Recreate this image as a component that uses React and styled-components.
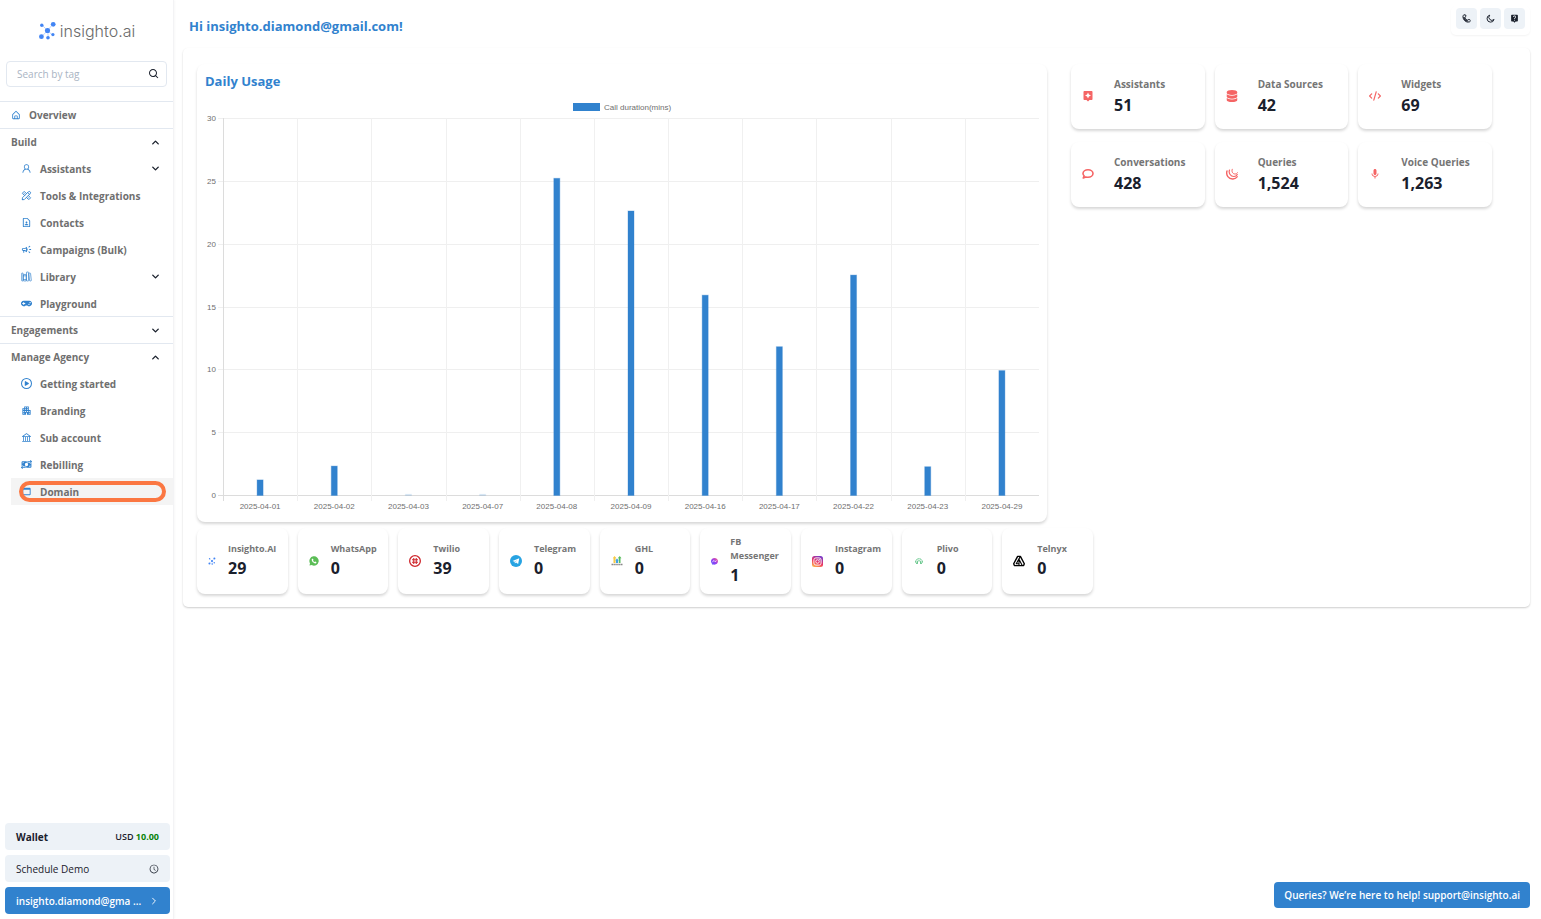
import { useState } from "react";
import styled, { createGlobalStyle, css } from "styled-components";
import { AiOutlineUser, AiOutlineBank, AiOutlineClockCircle } from "react-icons/ai";
import { BiHomeAlt, BiSearch } from "react-icons/bi";
import { FaGamepad } from "react-icons/fa";
import { FaDatabase, FaCode, FaRegCirclePlay, FaMoneyBillTransfer } from "react-icons/fa6";
import { IoLibraryOutline, IoChevronForward } from "react-icons/io5";
import { LuChevronDown, LuChevronUp } from "react-icons/lu";
import { TbTools } from "react-icons/tb";
import {
  MdAssistant,
  MdMic,
  MdLiveHelp,
  MdOutlineCampaign,
  MdOutlineContactPage,
  MdWebAsset,
  MdApartment,
} from "react-icons/md";

/* ---------- icons and logos ---------- */

const BubbleIcon = () => (
  <svg viewBox="0 0 24 24" fill="none" stroke="currentColor" strokeWidth="3.200" strokeLinejoin="round" aria-hidden="true">
    <path d="M12 3.500 C17.500 3.500 22 6.700 22 11 C22 15.300 17.500 18.500 12 18.500 C10.500 18.500 9 18.300 7.700 17.800 L2.500 20 L4.300 15.500 C2.800 14.300 2 12.700 2 11 C2 6.700 6.500 3.500 12 3.500 Z" />
  </svg>
);

const JqueryIcon = () => (
  <svg viewBox="0 0 24 24" fill="none" stroke="currentColor" strokeLinecap="round" aria-hidden="true">
    <path d="M2 6 C-0.500 14 5 22.500 14 22 C18 21.800 21 20 22.500 17.500" strokeWidth="2.800" />
    <path d="M7 4 C4.500 10.500 9.500 17.300 16 17 C19.500 16.800 21.500 15 22.500 13" strokeWidth="2.400" />
    <path d="M12.500 2.500 C10.500 7 13.500 12 18 12 C20.500 12 22 11 22.800 9.500" strokeWidth="2" />
  </svg>
);

const CallIcon = () => (
  <svg viewBox="0 0 24 24" fill="none" stroke="currentColor" strokeWidth="2.200" aria-hidden="true">
    <circle cx="6" cy="6" r="3.600" />
    <circle cx="18.500" cy="18" r="3.600" />
    <path d="M2.500 7.500 C3 15 9 21.500 16.500 21.800 M8 9 C9 12.500 11.500 15 15 16.500" strokeWidth="2.600" />
    <path d="M5 11 C7 15 9 17 13 19" strokeWidth="3" />
    <path d="M6 1 C9 1 11 3 11 6" strokeWidth="1.800" />
  </svg>
);

const MoonIcon = () => (
  <svg viewBox="0 0 24 24" fill="none" stroke="currentColor" strokeWidth="2.600" strokeLinejoin="round" aria-hidden="true">
    <path d="M10 3 A9.500 9.500 0 1 0 21.500 14.500 A7.500 7.500 0 0 1 10 3 Z" />
  </svg>
);

const Molecule = ({ size }) => (
  <svg width={size} height={size} viewBox="0 0 18 20" fill="#4285f4" aria-hidden="true">
    <path d="M3 4 L9 10 L15 3 M2.500 17 L9 10 L14.500 15 M9 10 L10 18" stroke="#a9c6fb" strokeWidth="0.800" fill="none" />
    <circle cx="3" cy="4.500" r="1.800" />
    <circle cx="15" cy="3.500" r="2.500" />
    <circle cx="9" cy="10" r="2.700" />
    <circle cx="2.600" cy="16.500" r="2.500" />
    <circle cx="9.500" cy="17.700" r="1.900" />
    <circle cx="14.700" cy="14.300" r="1.700" />
  </svg>
);

const WhatsAppLogo = () => (
  <svg width="10" height="10" viewBox="0 0 20 20" aria-hidden="true">
    <path d="M1 19 L2 14.500 A9.300 9.300 0 1 1 5.500 18 Z" fill="#5bbd56" />
    <path d="M6.300 5.500 L8 5.300 L9 8 L8 9.200 Q9 11.300 11.300 12.200 L12.600 11.200 L15 12.500 Q14.500 15 12 15 Q6 13.500 5.300 8 Q5.300 6.300 6.300 5.500 Z" fill="#fff" />
  </svg>
);

const TwilioLogo = () => (
  <svg width="12" height="12" viewBox="0 0 24 24" fill="none" stroke="#cf272d" aria-hidden="true">
    <circle cx="12" cy="12" r="10.700" strokeWidth="2.600" />
    <path d="M9.500 6 V18 M14.500 6 V18 M6 9.500 H18 M6 14.500 H18" strokeWidth="2.200" />
  </svg>
);

const TelegramLogo = () => (
  <svg width="12" height="12" viewBox="0 0 24 24" aria-hidden="true">
    <circle cx="12" cy="12" r="12" fill="#27a3e2" />
    <path d="M5 12 L18.500 6.500 L16.300 18 L12 15 L9.800 17 L9.300 13.500 Z" fill="#fff" />
    <path d="M9.600 13.600 L15.500 9.200 L11 14.400 Z" fill="#9fcdec" />
  </svg>
);

const GhlLogo = () => (
  <svg width="12" height="12" viewBox="0 0 24 24" aria-hidden="true">
    <path d="M7 2 L11 6.500 H9 V16 H5 V6.500 H3.500 Z" fill="#f6c945" />
    <path d="M12 7 L15.500 11 H14 V16 H10 V11 H8.500 Z" fill="#3fa0e8" />
    <path d="M17.500 2 L21 6.500 H19 V16 H15.500 V6.500 H13.500 Z" fill="#58bd5b" />
    <path d="M1 19 H23" stroke="#888" strokeWidth="2.600" strokeDasharray="3 0.800" />
  </svg>
);

const MessengerLogo = () => (
  <svg width="7" height="7" viewBox="0 0 20 20" aria-hidden="true">
    <defs>
      <linearGradient id="msgr" x1="0" y1="1" x2="1" y2="0">
        <stop offset="0" stopColor="#4a5cff" />
        <stop offset="0.500" stopColor="#9a3df0" />
        <stop offset="1" stopColor="#ff6077" />
      </linearGradient>
    </defs>
    <path d="M10 0 C4 0 0 4 0 9.500 C0 13 1.500 15.500 4 17 L4 20 L7 18.700 C14 20 20 16 20 9.500 C20 4 16 0 10 0 Z" fill="url(#msgr)" />
    <path d="M4 12 L8 7 L11.500 10.500 L16 7.500" stroke="#fff" strokeWidth="2.200" fill="none" />
  </svg>
);

const InstagramLogo = () => (
  <svg width="11" height="11" viewBox="0 0 22 22" aria-hidden="true">
    <defs>
      <linearGradient id="insta" x1="0.200" y1="1" x2="0.700" y2="0">
        <stop offset="0" stopColor="#fdb44b" />
        <stop offset="0.450" stopColor="#ee3560" />
        <stop offset="1" stopColor="#7a3ac8" />
      </linearGradient>
    </defs>
    <rect width="22" height="22" rx="5" fill="url(#insta)" />
    <rect x="3.800" y="3.800" width="14.400" height="14.400" rx="4" stroke="#fff" strokeWidth="1.800" fill="none" />
    <circle cx="11" cy="11" r="3.500" stroke="#fff" strokeWidth="1.800" fill="none" />
    <circle cx="15.200" cy="6.800" r="1" fill="#fff" />
  </svg>
);

const PlivoLogo = () => (
  <svg width="12" height="6" viewBox="-4 0 24 12" fill="none" stroke="#35b567" strokeWidth="1.800" aria-hidden="true">
    <path d="M1 9 Q1 2 8 1.500 Q15 2 15 9" strokeDasharray="3 1" />
    <path d="M4.500 5.500 V10 M8 4 V7 M11.500 5.500 V10 M2 10.500 H6 M10 10.500 H14" />
  </svg>
);

const TelnyxLogo = () => (
  <svg width="12" height="12" viewBox="0 0 26 24" fill="none" stroke="#000" strokeWidth="3" strokeLinejoin="round" aria-hidden="true">
    <path d="M10 2 H16 L24.500 18 L23 22 H3 L1.500 18 Z" />
    <path d="M13 8 L20 22 M16 2 L7 18 H13 M13 12 V22" strokeWidth="2.400" />
  </svg>
);

/* ---------- data ---------- */

const buildLinks = [
  { label: "Assistants", icon: AiOutlineUser, more: true },
  { label: "Tools & Integrations", icon: TbTools },
  { label: "Contacts", icon: MdOutlineContactPage },
  { label: "Campaigns (Bulk)", icon: MdOutlineCampaign },
  { label: "Library", icon: IoLibraryOutline, more: true },
  { label: "Playground", icon: FaGamepad },
];

const agencyLinks = [
  { label: "Getting started", icon: FaRegCirclePlay },
  { label: "Branding", icon: MdApartment },
  { label: "Sub account", icon: AiOutlineBank },
  { label: "Rebilling", icon: FaMoneyBillTransfer },
  { label: "Domain", icon: MdWebAsset, active: true },
];

const stats = [
  { label: "Assistants", value: "51", icon: MdAssistant },
  { label: "Data Sources", value: "42", icon: FaDatabase },
  { label: "Widgets", value: "69", icon: FaCode },
  { label: "Conversations", value: "428", icon: BubbleIcon },
  { label: "Queries", value: "1,524", icon: JqueryIcon },
  { label: "Voice Queries", value: "1,263", icon: MdMic },
];

const channels = [
  { label: "Insighto.AI", value: 29, logo: <Molecule size={8} /> },
  { label: "WhatsApp", value: 0, logo: <WhatsAppLogo /> },
  { label: "Twilio", value: 39, logo: <TwilioLogo /> },
  { label: "Telegram", value: 0, logo: <TelegramLogo /> },
  { label: "GHL", value: 0, logo: <GhlLogo /> },
  { label: "FB Messenger", value: 1, logo: <MessengerLogo /> },
  { label: "Instagram", value: 0, logo: <InstagramLogo /> },
  { label: "Plivo", value: 0, logo: <PlivoLogo /> },
  { label: "Telnyx", value: 0, logo: <TelnyxLogo /> },
];

const usage = [
  ["2025-04-01", 1.2],
  ["2025-04-02", 2.3],
  ["2025-04-03", 0.05],
  ["2025-04-07", 0.05],
  ["2025-04-08", 25.2],
  ["2025-04-09", 22.6],
  ["2025-04-16", 15.9],
  ["2025-04-17", 11.8],
  ["2025-04-22", 17.5],
  ["2025-04-23", 2.25],
  ["2025-04-29", 9.9],
];

/* ---------- chart ---------- */

const CHART = { left: 26, right: 842, top: 20, bottom: 397, max: 30 };

const UsageChart = () => {
  const step = (CHART.right - CHART.left) / usage.length;
  const y = (v) => CHART.bottom - (v / CHART.max) * (CHART.bottom - CHART.top);

  return (
    <ChartSvg viewBox="0 0 850 424" role="img" aria-label="Call duration in minutes per day">
      <rect x="376" y="5" width="27" height="8" fill="#3182ce" />
      <text x="407" y="12">
        Call duration(mins)
      </text>
      {[0, 5, 10, 15, 20, 25, 30].map((tick) => (
        <g key={tick}>
          <line
            x1={CHART.left - 5}
            x2={CHART.right}
            y1={Math.round(y(tick)) + 0.5}
            y2={Math.round(y(tick)) + 0.5}
            stroke={tick === 0 ? "#dcdcdc" : "#efefef"}
          />
          <text x="19" y={Math.round(y(tick)) + 3} textAnchor="end">
            {tick}
          </text>
        </g>
      ))}
      {usage.map(([date, mins], i) => {
        const x = CHART.left + step * i;
        return (
          <g key={date}>
            <line
              x1={Math.round(x) + 0.5}
              x2={Math.round(x) + 0.5}
              y1={CHART.top}
              y2={CHART.bottom + 6}
              stroke={i === 0 ? "#dcdcdc" : "#f0f0f0"}
            />
            <rect
              x={x + step / 2 - 3}
              y={y(mins)}
              width="6"
              height={CHART.bottom + 0.5 - y(mins)}
              fill="#3182ce"
              stroke="#3182ce"
              strokeOpacity="0.35"
              opacity={mins < 0.1 ? 0.25 : 1}
            />
            <text x={x + step / 2} y="411" textAnchor="middle">
              {date}
            </text>
          </g>
        );
      })}
    </ChartSvg>
  );
};

/* ---------- sidebar ---------- */

const NavItems = ({ items }) => (
  <NavList>
    {items.map(({ label, icon: Icon, more, active }) => (
      <li key={label}>
        <NavLink href="#" $active={active}>
          <Icon />
          <span>{label}</span>
          {more && <Chevron as={LuChevronDown} />}
          {active && <ActiveRing />}
        </NavLink>
      </li>
    ))}
  </NavList>
);

const Section = ({ title, items, defaultOpen }) => {
  const [open, setOpen] = useState(defaultOpen);

  return (
    <>
      <SectionHeader type="button" aria-expanded={open} onClick={() => setOpen(!open)}>
        {title}
        <Chevron as={open ? LuChevronUp : LuChevronDown} />
      </SectionHeader>
      {open && <NavItems items={items} />}
    </>
  );
};

const App = () => {
  const [query, setQuery] = useState("");

  return (
    <Page>
      <GlobalStyle />
      <Sidebar>
        <Logo href="#">
          <Molecule size={19} />
          <span>insighto.ai</span>
        </Logo>
        <SearchBox>
          <input
            type="text"
            aria-label="Search by tag"
            placeholder="Search by tag"
            value={query}
            onChange={(e) => setQuery(e.target.value)}
          />
          <BiSearch />
        </SearchBox>
        <nav>
          <OverviewLink href="#">
            <BiHomeAlt />
            Overview
          </OverviewLink>
          <Section title="Build" items={buildLinks} defaultOpen />
          <Section title="Engagements" items={[]} defaultOpen={false} />
          <Section title="Manage Agency" items={agencyLinks} defaultOpen />
        </nav>
        <SidebarFooter>
          <FooterButton type="button" $weight={700}>
            Wallet
            <Balance>
              USD <b>10.00</b>
            </Balance>
          </FooterButton>
          <FooterButton type="button">
            Schedule Demo
            <AiOutlineClockCircle />
          </FooterButton>
          <FooterButton type="button" $primary $weight={600}>
            insighto.diamond@gma ...
            <IoChevronForward />
          </FooterButton>
        </SidebarFooter>
      </Sidebar>

      <Main>
        <TopBar>
          <Title as="h1">Hi insighto.diamond@gmail.com!</Title>
          <Actions>
            <IconButton type="button" aria-label="Call">
              <CallIcon />
            </IconButton>
            <IconButton type="button" aria-label="Dark mode">
              <MoonIcon />
            </IconButton>
            <IconButton type="button" aria-label="Help">
              <MdLiveHelp />
            </IconButton>
          </Actions>
        </TopBar>

        <Dashboard>
          <Overview>
            <ChartCard>
              <Title>Daily Usage</Title>
              <UsageChart />
            </ChartCard>
            <StatGrid>
              {stats.map(({ label, value, icon: Icon }) => (
                <StatCard key={label}>
                  <Icon />
                  <div>
                    <StatLabel>{label}</StatLabel>
                    <StatValue>{value}</StatValue>
                  </div>
                </StatCard>
              ))}
            </StatGrid>
          </Overview>
          <ChannelRow>
            {channels.map(({ label, value, logo }) => (
              <ChannelCard key={label}>
                {logo}
                <div>
                  <StatLabel $small>{label}</StatLabel>
                  <StatValue>{value}</StatValue>
                </div>
              </ChannelCard>
            ))}
          </ChannelRow>
        </Dashboard>
      </Main>

      <HelpLink href="mailto:support@insighto.ai">
        Queries? We’re here to help! support@insighto.ai
      </HelpLink>
    </Page>
  );
};

const GlobalStyle = createGlobalStyle`
  * {
    box-sizing: border-box;
  }

  body {
    margin: 0;
    background: #fff;
    color: #1a202c;
    font-family: "Open Sans", "Noto Sans", sans-serif;
    font-size: 10px;
  }

  h1, h2, p, ul {
    margin: 0;
    padding: 0;
  }

  button, input {
    font: inherit;
    color: inherit;
  }

  a {
    color: inherit;
    text-decoration: none;
  }
`;

const Page = styled.div`
  display: flex;
  min-height: 100vh;
`;

const Sidebar = styled.aside`
  display: flex;
  flex-direction: column;
  flex: none;
  width: 174px;
  min-height: 100vh;
  border-right: 1px solid #f3f3f5;
  box-shadow: 1px 0 2px rgba(0, 0, 0, 0.03);
`;

const Logo = styled.a`
  display: flex;
  align-items: center;
  justify-content: center;
  gap: 3px;
  height: 61px;
  color: #6b6b6b;
  font-family: Inter, sans-serif;
  font-size: 16px;
  font-weight: 300;
`;

const SearchBox = styled.label`
  display: flex;
  align-items: center;
  height: 26px;
  margin: 0 6px 14px;
  padding: 0 6px 0 10px;
  border: 1px solid #e2e8f0;
  border-radius: 4px;

  input {
    flex: 1;
    min-width: 0;
    padding: 0;
    border: 0;
    outline: 0;
    background: none;
  }

  input::placeholder {
    color: #a9b4c3;
    opacity: 1;
  }

  svg {
    width: 12px;
    height: 12px;
  }
`;

const navRow = css`
  display: flex;
  align-items: center;
  width: 100%;
  height: 27px;
  color: #6f6f6f;
  font-weight: 700;
`;

const OverviewLink = styled.a`
  ${navRow}
  gap: 8px;
  padding: 0 11px 1px;
  border-top: 1px solid #e2e8f0;

  svg {
    width: 10px;
    height: 10px;
    color: #3182ce;
  }
`;

const SectionHeader = styled.button`
  ${navRow}
  justify-content: space-between;
  padding: 0 12px 0 11px;
  border: 0;
  border-top: 1px solid #e2e8f0;
  background: none;
  cursor: pointer;
`;

const NavList = styled.ul`
  margin: 0 0 -1px 11px;
  list-style: none;
`;

const NavLink = styled.a`
  ${navRow}
  position: relative;
  gap: 8px;
  padding: 0 12px 0 10px;
  background: ${({ $active }) => ($active ? "#f4f4f4" : "none")};

  span {
    flex: 1;
  }

  svg:first-child {
    flex: none;
    width: 11px;
    height: 11px;
    color: #3182ce;
  }
`;

const Chevron = styled.svg`
  width: 11px;
  height: 11px;
  color: #1a202c;
  stroke-width: 3;
`;

const ActiveRing = styled.i`
  position: absolute;
  inset: 3px 7px 3px 8px;
  border: 4px solid #fb7742;
  border-radius: 11px;
`;

const SidebarFooter = styled.div`
  display: flex;
  flex-direction: column;
  gap: 5px;
  margin-top: auto;
  padding: 5px 3px 5px 5px;
`;

const FooterButton = styled.button`
  display: flex;
  align-items: center;
  justify-content: space-between;
  height: 27px;
  padding: 0 11px;
  border: 0;
  border-radius: 4px;
  background: ${({ $primary }) => ($primary ? "#3182ce" : "#edf2f7")};
  color: ${({ $primary }) => ($primary ? "#fff" : "#1a202c")};
  font-weight: ${({ $weight = 400 }) => $weight};
  white-space: nowrap;
  cursor: pointer;

  svg {
    width: 10px;
    height: 10px;
  }
`;

const Balance = styled.span`
  font-size: 9px;
  font-weight: 600;

  b {
    color: #078307;
    font-weight: 700;
  }
`;

const Main = styled.main`
  flex: 1;
  min-width: 0;
  padding: 6px 11px 0 9px;
`;

const TopBar = styled.header`
  display: flex;
  align-items: flex-start;
  justify-content: space-between;
  height: 42px;
  padding-left: 6px;
`;

const Title = styled.h2`
  color: #3182ce;
  font-size: 13px;
  font-weight: 700;
  line-height: 40px;
`;

const Actions = styled.div`
  display: flex;
  gap: 3px;
  padding: 2px 5px 6px;
  border-radius: 5px;
  box-shadow: 0 1px 2px rgba(0, 0, 0, 0.05);
`;

const IconButton = styled.button`
  display: flex;
  align-items: center;
  justify-content: center;
  width: 21px;
  height: 21px;
  padding: 0;
  border: 0;
  border-radius: 4px;
  background: #edf2f7;
  cursor: pointer;

  svg {
    width: 9px;
    height: 9px;
  }
`;

const Dashboard = styled.section`
  padding: 16px 38px 13px 14px;
  border-radius: 5px;
  box-shadow: 0 1px 2px rgba(0, 0, 0, 0.2);
`;

const Overview = styled.div`
  display: flex;
  align-items: flex-start;
  gap: 24px;
`;

const card = css`
  border-radius: 8px;
  background: #fff;
  box-shadow: 0 2px 3px rgba(0, 0, 0, 0.16);
`;

const ChartCard = styled.div`
  ${card}
  flex: 1;
  min-width: 0;

  h2 {
    padding-left: 8px;
    line-height: 34px;
  }
`;

const ChartSvg = styled.svg`
  display: block;
  width: 100%;
  height: auto;

  text {
    fill: #6f6f6f;
    font-family: "Liberation Sans", Arial, sans-serif;
    font-size: 8px;
  }
`;

const StatGrid = styled.div`
  display: grid;
  grid-template-columns: repeat(3, 1fr);
  gap: 13px 10px;
  width: 421px;
`;

const StatCard = styled.article`
  ${card}
  display: flex;
  align-items: center;
  gap: 20px;
  height: 65px;
  padding: 0 11px 2px;

  svg {
    flex: none;
    width: 12px;
    height: 12px;
    color: #f56565;
  }
`;

const StatLabel = styled.p`
  color: #757575;
  font-size: ${({ $small }) => ($small ? "9px" : "10px")};
  font-weight: 700;
  line-height: ${({ $small }) => ($small ? "14px" : "18px")};
`;

const StatValue = styled.p`
  color: #1a202c;
  font-size: 16px;
  font-weight: 700;
  line-height: 24px;
`;

const ChannelRow = styled.div`
  display: grid;
  grid-template-columns: repeat(9, 1fr);
  gap: 10px;
  max-width: 896px;
  margin-top: 6px;
`;

const ChannelCard = styled.article`
  ${card}
  display: flex;
  align-items: center;
  gap: 12px;
  min-width: 0;
  height: 66px;
  padding-left: 11px;

  svg {
    flex: none;
  }
`;

const HelpLink = styled.a`
  position: fixed;
  right: 11px;
  bottom: 11px;
  padding: 0 10px;
  border-radius: 4px;
  background: #3182ce;
  color: #fff;
  font-weight: 600;
  line-height: 26px;
`;

export default App;
